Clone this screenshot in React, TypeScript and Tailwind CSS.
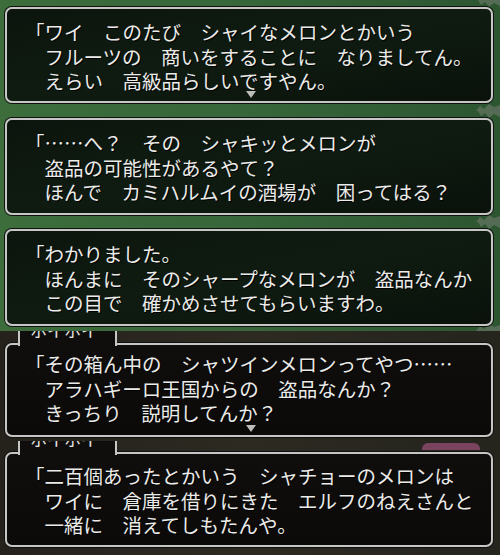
import React from "react";

interface Dialog {
  lines: string[];
  panelH: string;
  boxTop: string;
  boxH: string;
  padTop: string;
  dark?: boolean;
  arrow?: boolean;
  tab?: boolean;
  pink?: boolean;
}

const dialogs: Dialog[] = [
  {
    lines: [
      "「ワイ　このたび　シャイなメロンとかいう",
      "　フルーツの　商いをすることに　なりましてん。",
      "　えらい　高級品らしいですやん。",
    ],
    panelH: "h-[111px]",
    boxTop: "mt-[7px]",
    boxH: "h-[96px]",
    padTop: "pt-[11px]",
    arrow: true,
  },
  {
    lines: [
      "「……へ？　その　シャキッとメロンが",
      "　盗品の可能性があるやて？",
      "　ほんで　カミハルムイの酒場が　困ってはる？",
    ],
    panelH: "h-[111px]",
    boxTop: "mt-[7px]",
    boxH: "h-[97px]",
    padTop: "pt-[11px]",
  },
  {
    lines: [
      "「わかりました。",
      "　ほんまに　そのシャープなメロンが　盗品なんか",
      "　この目で　確かめさせてもらいますわ。",
    ],
    panelH: "h-[109px]",
    boxTop: "mt-[7px]",
    boxH: "h-[97px]",
    padTop: "pt-[11px]",
  },
  {
    lines: [
      "「その箱ん中の　シャツインメロンってやつ……",
      "　アラハギーロ王国からの　盗品なんか？",
      "　きっちり　説明してんか？",
    ],
    panelH: "h-[110px]",
    boxTop: "mt-[12px]",
    boxH: "h-[94px]",
    padTop: "pt-[7px]",
    dark: true,
    arrow: true,
    tab: true,
  },
  {
    lines: [
      "「二百個あったとかいう　シャチョーのメロンは",
      "　ワイに　倉庫を借りにきた　エルフのねえさんと",
      "　一緒に　消えてしもたんや。",
    ],
    panelH: "h-[114px]",
    boxTop: "mt-[11px]",
    boxH: "h-[95px]",
    padTop: "pt-[10px]",
    dark: true,
    tab: true,
    pink: true,
  },
];

/* ── one cropped screenshot panel ── */
function Panel({ d }: { d: Dialog }) {
  return (
    <div
      className={`relative overflow-hidden ${d.panelH} ${
        d.dark
          ? "bg-gradient-to-r from-[#24221b] via-[#2c2a21] to-[#25241d]"
          : "bg-gradient-to-r from-[#3c6d3b] via-[#37663a] to-[#2c5530]"
      }`}
    >
      {/* background bits peeking out */}
      {!d.dark && (
        <svg className="absolute right-0 top-0" width="30" height="12" viewBox="0 0 30 12">
          <path d="M8 0 L11 5 L15 2 L19 7 L24 3 L30 6 L30 0 Z" fill="#7d8279" opacity="0.5" />
        </svg>
      )}
      {!d.dark && (
        <svg className="absolute right-0 bottom-0" width="30" height="8" viewBox="0 0 30 8">
          <path d="M6 8 L10 3 L14 6 L19 1 L24 4 L30 2 L30 8 Z" fill="#7d8279" opacity="0.5" />
        </svg>
      )}
      {d.pink && <div className="absolute left-[422px] top-[2px] h-[7px] w-[58px] rounded-t-[6px] bg-[#7a4460]" />}

      <div
        className={`relative ml-[5px] w-[488px] ${d.boxTop} ${d.boxH} rounded-[7px] border-2 border-[#c6c6c4] shadow-[0_0_0_1px_#111] ${
          d.dark
            ? "bg-gradient-to-b from-[#0f0e0c] to-[#0b0a09]"
            : "bg-gradient-to-br from-[#0c150d] via-[#0f1b10] to-[#0a120b]"
        }`}
      >
        {d.tab && (
          <div
            className={`absolute left-[11px] top-[-14px] h-[15px] w-[99px] overflow-hidden border-x-2 border-[#c6c6c4] ${
              d.dark ? "bg-[#0f0e0c]" : "bg-[#0c150d]"
            }`}
          >
            <div className="mt-[-10px] pl-[10px] text-[17px] leading-[17px] text-[#e4e4e2] font-['Noto_Sans_CJK_JP',sans-serif]">
              ホイホイ
            </div>
          </div>
        )}

        <div
          className={`${d.padTop} pl-[18px] text-[19.5px] leading-[24.5px] text-[#ebebe9] whitespace-pre font-['Noto_Sans_CJK_JP',sans-serif] [text-shadow:1px_1px_0_#000]`}
        >
          {d.lines.map((l, i) => (
            <div key={i}>{l}</div>
          ))}
        </div>

        {d.arrow && (
          <svg className="absolute left-[239px] bottom-[3px]" width="10" height="7" viewBox="0 0 10 7">
            <path d="M0 0 L10 0 L5 7 Z" fill="#bdbdbb" />
          </svg>
        )}
      </div>
    </div>
  );
}

export default function App() {
  return (
    <div className="w-[500px] h-[555px] overflow-hidden bg-black">
      {dialogs.map((d, i) => (
        <Panel key={i} d={d} />
      ))}
    </div>
  );
}
